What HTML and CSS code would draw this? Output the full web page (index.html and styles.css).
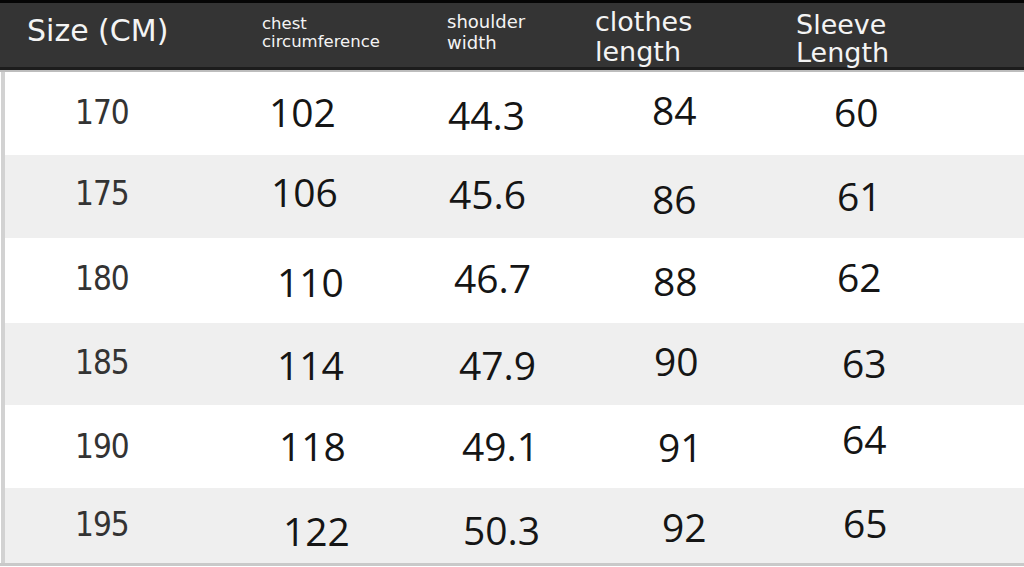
FILE: index.html
```html
<!DOCTYPE html>
<html lang="en">
<head>
<meta charset="utf-8">
<title>Size chart</title>
<link rel="stylesheet" href="styles.css">
</head>
<body>
<div class="chart">
  <div class="head">
    <div class="h c1">Size (CM)</div>
    <div class="h c2">chest<br>circumference</div>
    <div class="h c3">shoulder<br>width</div>
    <div class="h c4">clothes<br>length</div>
    <div class="h c5">Sleeve<br>Length</div>
  </div>
  <div class="row r1"><div class="c1">170</div><div class="c2">102</div><div class="c3">44.3</div><div class="c4">84</div><div class="c5">60</div></div>
  <div class="row r2"><div class="c1">175</div><div class="c2">106</div><div class="c3">45.6</div><div class="c4">86</div><div class="c5">61</div></div>
  <div class="row r3"><div class="c1">180</div><div class="c2">110</div><div class="c3">46.7</div><div class="c4">88</div><div class="c5">62</div></div>
  <div class="row r4"><div class="c1">185</div><div class="c2">114</div><div class="c3">47.9</div><div class="c4">90</div><div class="c5">63</div></div>
  <div class="row r5"><div class="c1">190</div><div class="c2">118</div><div class="c3">49.1</div><div class="c4">91</div><div class="c5">64</div></div>
  <div class="row r6"><div class="c1">195</div><div class="c2">122</div><div class="c3">50.3</div><div class="c4">92</div><div class="c5">65</div></div>
</div>
</body>
</html>
```
FILE: styles.css
```css
html, body { margin: 0; padding: 0; background: #fff; }
.chart { width: 1024px; height: 567px; overflow: hidden; }

.head, .row {
  display: grid;
  grid-template-columns: 240px 190px 150px 200px 1fr;
  align-items: start;
}
.head {
  height: 72px;
  background: linear-gradient(to bottom, #050505 0 3px, #343434 3px 67px, #1c1c1c 67px 70px, #bdbdbd 70px 72px);
  color: #f4f4f4;
  font-family: "DejaVu Sans", sans-serif;
}
.head .c1 { font-size: 30px; line-height: 34px; padding: 14px 0 0 27px; }
.head .c2 { font-size: 16.5px; line-height: 18px; padding: 15px 0 0 22px; }
.head .c3 { font-size: 18px; line-height: 21px; padding: 11px 0 0 17px; }
.head .c4 { font-size: 27px; line-height: 30px; padding: 7px 0 0 15px; }
.head .c5 { font-size: 27px; line-height: 28px; padding: 11px 0 0 16px; }

.row {
  box-sizing: border-box;
  box-shadow: inset 1px 0 0 #fff, inset 5px 0 0 #d2d2d2;
  font-family: "Open Sans", sans-serif;
  font-size: 39px;
  line-height: 40px;
  color: #151515;
}
.row .c1 {
  font-family: "DejaVu Sans Condensed", "DejaVu Sans", sans-serif;
  font-size: 33px;
  letter-spacing: -1px;
  color: #333;
}
.r1 { height: 83px; background: #fff; }
.r2 { height: 83px; background: #efefef; }
.r3 { height: 85px; background: #fff; }
.r4 { height: 82px; background: #efefef; }
.r5 { height: 83px; background: #fff; }
.r6 { height: 78px; background: #efefef; border-bottom: 3px solid #c9c9c9; }

.r1 .c1 { padding: 21px 0 0 75px; }
.r1 .c2 { padding: 20px 0 0 29px; }
.r1 .c3 { padding: 23px 0 0 18px; }
.r1 .c4 { padding: 18px 0 0 72px; }
.r1 .c5 { padding: 20px 0 0 54px; }

.r2 .c1 { padding: 19px 0 0 75px; }
.r2 .c2 { padding: 17px 0 0 31px; }
.r2 .c3 { padding: 19px 0 0 19px; }
.r2 .c4 { padding: 24px 0 0 72px; }
.r2 .c5 { padding: 21px 0 0 57px; }

.r3 .c1 { padding: 21px 0 0 75px; }
.r3 .c2 { padding: 24px 0 0 37px; }
.r3 .c3 { padding: 20px 0 0 24px; }
.r3 .c4 { padding: 23px 0 0 73px; }
.r3 .c5 { padding: 19px 0 0 57px; }

.r4 .c1 { padding: 20px 0 0 75px; }
.r4 .c2 { padding: 22px 0 0 37px; }
.r4 .c3 { padding: 22px 0 0 29px; }
.r4 .c4 { padding: 18px 0 0 74px; }
.r4 .c5 { padding: 20px 0 0 62px; }

.r5 .c1 { padding: 22px 0 0 75px; }
.r5 .c2 { padding: 21px 0 0 39px; }
.r5 .c3 { padding: 21px 0 0 32px; }
.r5 .c4 { padding: 22px 0 0 78px; }
.r5 .c5 { padding: 14px 0 0 62px; }

.r6 .c1 { padding: 17px 0 0 75px; }
.r6 .c2 { padding: 23px 0 0 43px; }
.r6 .c3 { padding: 22px 0 0 33px; }
.r6 .c4 { padding: 19px 0 0 82px; }
.r6 .c5 { padding: 15px 0 0 63px; }
```
